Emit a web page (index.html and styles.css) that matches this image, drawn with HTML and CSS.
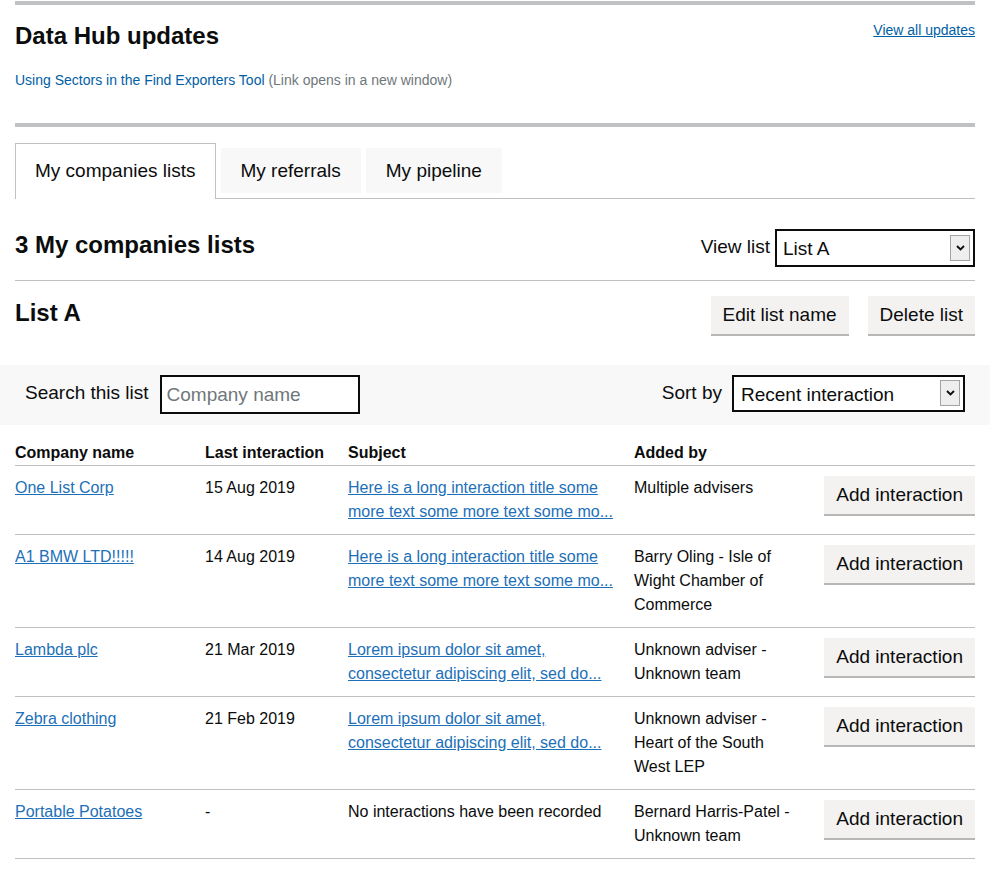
FILE: index.html
```html
<!DOCTYPE html>
<html lang="en">
<head>
<meta charset="utf-8">
<title>Data Hub</title>
<link rel="stylesheet" href="styles.css">
</head>
<body>
<div class="page">
  <section class="updates">
    <div class="updates-head">
      <h2 class="updates-title">Data Hub updates</h2>
      <a class="updates-all" href="#">View all updates</a>
    </div>
    <p class="updates-item"><a class="updates-link" href="#">Using Sectors in the Find Exporters Tool</a> <span class="updates-note">(Link opens in a new window)</span></p>
  </section>

  <ul class="tabs">
    <li class="tab tab-active">My companies lists</li>
    <li class="tab">My referrals</li>
    <li class="tab">My pipeline</li>
  </ul>

  <div class="lists-head">
    <h2 class="heading lists-title">3 My companies lists</h2>
    <div class="field">
      <label class="field-label">View list</label>
      <div class="select-wrap select-wrap-view">
        <select class="select"><option>List A</option></select>
        <span class="select-arrow"><svg width="9" height="6" viewBox="0 0 9 6"><path d="M1 1 L4.5 4.5 L8 1" fill="none" stroke="#0b0c0c" stroke-width="1.8"/></svg></span>
      </div>
    </div>
  </div>

  <div class="list-head">
    <h2 class="heading list-title">List A</h2>
    <div class="actions">
      <button class="btn">Edit list name</button>
      <button class="btn">Delete list</button>
    </div>
  </div>

  <div class="filters">
    <div class="field field-top">
      <label class="field-label search-label">Search this list</label>
      <input class="input" type="text" placeholder="Company name">
    </div>
    <div class="field field-top">
      <label class="field-label sort-label">Sort by</label>
      <div class="select-wrap select-wrap-sort">
        <select class="select select-sort"><option>Recent interaction</option></select>
        <span class="select-arrow"><svg width="9" height="6" viewBox="0 0 9 6"><path d="M1 1 L4.5 4.5 L8 1" fill="none" stroke="#0b0c0c" stroke-width="1.8"/></svg></span>
      </div>
    </div>
  </div>

  <table class="table">
    <colgroup>
      <col class="col-company">
      <col class="col-date">
      <col class="col-subject">
      <col class="col-added">
      <col class="col-action">
    </colgroup>
    <thead>
      <tr>
        <th>Company name</th>
        <th>Last interaction</th>
        <th>Subject</th>
        <th>Added by</th>
        <th></th>
      </tr>
    </thead>
    <tbody>
      <tr>
        <td><a class="link" href="#">One List Corp</a></td>
        <td>15 Aug 2019</td>
        <td><a class="link" href="#">Here is a long interaction title some more text some more text some mo...</a></td>
        <td>Multiple advisers</td>
        <td class="cell-action"><button class="btn">Add interaction</button></td>
      </tr>
      <tr>
        <td><a class="link" href="#">A1 BMW LTD!!!!!</a></td>
        <td>14 Aug 2019</td>
        <td><a class="link" href="#">Here is a long interaction title some more text some more text some mo...</a></td>
        <td>Barry Oling - Isle of Wight Chamber of Commerce</td>
        <td class="cell-action"><button class="btn">Add interaction</button></td>
      </tr>
      <tr>
        <td><a class="link" href="#">Lambda plc</a></td>
        <td>21 Mar 2019</td>
        <td><a class="link" href="#">Lorem ipsum dolor sit amet, consectetur adipiscing elit, sed do...</a></td>
        <td>Unknown adviser - Unknown team</td>
        <td class="cell-action"><button class="btn">Add interaction</button></td>
      </tr>
      <tr>
        <td><a class="link" href="#">Zebra clothing</a></td>
        <td>21 Feb 2019</td>
        <td><a class="link" href="#">Lorem ipsum dolor sit amet, consectetur adipiscing elit, sed do...</a></td>
        <td>Unknown adviser - Heart of the South West LEP</td>
        <td class="cell-action"><button class="btn">Add interaction</button></td>
      </tr>
      <tr>
        <td><a class="link" href="#">Portable Potatoes</a></td>
        <td>-</td>
        <td>No interactions have been recorded</td>
        <td>Bernard Harris-Patel - Unknown team</td>
        <td class="cell-action"><button class="btn">Add interaction</button></td>
      </tr>
    </tbody>
  </table>
</div>
</body>
</html>
```

FILE: styles.css
```css
* { box-sizing: border-box; }

html, body {
  margin: 0;
  padding: 0;
  background: #ffffff;
}

body {
  font-family: "Liberation Sans", Arial, sans-serif;
  color: #0b0c0c;
}

.page {
  padding: 1px 15px 30px;
}

/* Updates */
.updates {
  border-top: 4px solid #bfc1c3;
  border-bottom: 4px solid #bfc1c3;
  padding: 16px 0 33px;
}

.updates-head {
  display: flex;
  justify-content: space-between;
  align-items: flex-start;
}

.updates-title {
  margin: 0;
  font-size: 24px;
  line-height: 30px;
  font-weight: 700;
}

.updates-all {
  font-size: 14px;
  line-height: 20px;
  color: #005ea5;
  margin-top: -1px;
}

.updates-item {
  margin: 19px 0 0;
  font-size: 14px;
  line-height: 20px;
}

.updates-link {
  color: #005ea5;
  text-decoration: none;
}

.updates-note {
  color: #6f777b;
}

/* Tabs */
.tabs {
  list-style: none;
  margin: 16px 0 0;
  padding: 0;
  display: flex;
  align-items: flex-start;
  border-bottom: 1px solid #bfc1c3;
}

.tab {
  margin: 5px 0 0 5px;
  padding: 10px 20px;
  font-size: 19px;
  line-height: 25px;
  background: #f8f8f8;
}

.tab-active {
  margin: 0 0 -1px 0;
  padding: 14px 19px 16px;
  background: #ffffff;
  border: 1px solid #bfc1c3;
  border-bottom: 0;
}

/* Headers */
.heading {
  margin: 0;
  font-size: 24px;
  line-height: 30px;
  font-weight: 700;
}

.lists-head {
  display: flex;
  justify-content: space-between;
  align-items: center;
  padding: 30px 0 13px;
  border-bottom: 1px solid #bfc1c3;
}

.lists-title {
  margin-bottom: 6px;
}

.field {
  display: flex;
  align-items: center;
}

.field-top {
  align-items: flex-start;
}

.field-label {
  font-size: 19px;
  line-height: 25px;
  margin-right: 5px;
  margin-top: -4px;
}

.field-top .field-label {
  margin-top: 5px;
}

.select-wrap {
  position: relative;
}

.select-wrap-view { width: 200px; }
.select-wrap-sort { width: 233px; }

.select {
  -webkit-appearance: none;
  appearance: none;
  display: block;
  width: 100%;
  height: 38px;
  margin: 0;
  border: 2px solid #0b0c0c;
  border-radius: 0;
  background: #ffffff;
  color: #0b0c0c;
  font-family: "Liberation Sans", Arial, sans-serif;
  font-size: 19px;
  padding: 1px 30px 0 6px;
}

.select-sort {
  padding-left: 7px;
  height: 37px;
}

.select-arrow {
  position: absolute;
  right: 5px;
  top: 6px;
  width: 20px;
  height: 26px;
  border: 1px solid #a3a3a3;
  background: #eeeeee;
  display: flex;
  align-items: center;
  justify-content: center;
  pointer-events: none;
}

.select-wrap-sort .select-arrow {
  height: 26px;
  top: 5px;
}

.list-head {
  display: flex;
  justify-content: space-between;
  align-items: flex-start;
  padding: 15px 0 29px;
}

.list-title {
  padding-top: 2px;
}

.actions {
  display: flex;
  gap: 19px;
}

.btn {
  font-family: "Liberation Sans", Arial, sans-serif;
  font-size: 19px;
  line-height: 24px;
  color: #0b0c0c;
  background: #f3f2f1;
  border: 0;
  border-radius: 0;
  padding: 7px 12px;
  margin: 0 0 2px;
  box-shadow: 0 2px 0 #b8b7b5;
  cursor: pointer;
}

/* Filters */
.filters {
  margin: 0 -15px;
  padding: 10px 25px 0;
  height: 60px;
  background: #f8f8f8;
  display: flex;
  justify-content: space-between;
  align-items: flex-start;
}

.search-label {
  margin-right: 11px;
}

.sort-label {
  margin-right: 10px;
}

.input {
  width: 200px;
  height: 39px;
  border: 2px solid #0b0c0c;
  border-radius: 0;
  padding: 0 5px;
  font-family: "Liberation Sans", Arial, sans-serif;
  font-size: 19px;
  color: #0b0c0c;
  background: #ffffff;
  margin: 0;
}

.input::placeholder {
  color: #6f777b;
  opacity: 1;
}

/* Table */
.table {
  width: 100%;
  margin-top: 16px;
  border-collapse: collapse;
  table-layout: fixed;
  font-size: 16px;
  line-height: 24px;
}

.col-company { width: 190px; }
.col-date { width: 143px; }
.col-subject { width: 286px; }
.col-added { width: 190px; }
.col-action { width: 151px; }

.table th {
  text-align: left;
  font-weight: 700;
  padding: 0 20px 0 0;
  border-bottom: 1px solid #bfc1c3;
}

.table td {
  vertical-align: top;
  padding: 10px 20px 10px 0;
  border-bottom: 1px solid #bfc1c3;
}

.table td.cell-action {
  padding: 10px 0 0;
  text-align: right;
}

.link {
  color: #1d70b8;
}
```
